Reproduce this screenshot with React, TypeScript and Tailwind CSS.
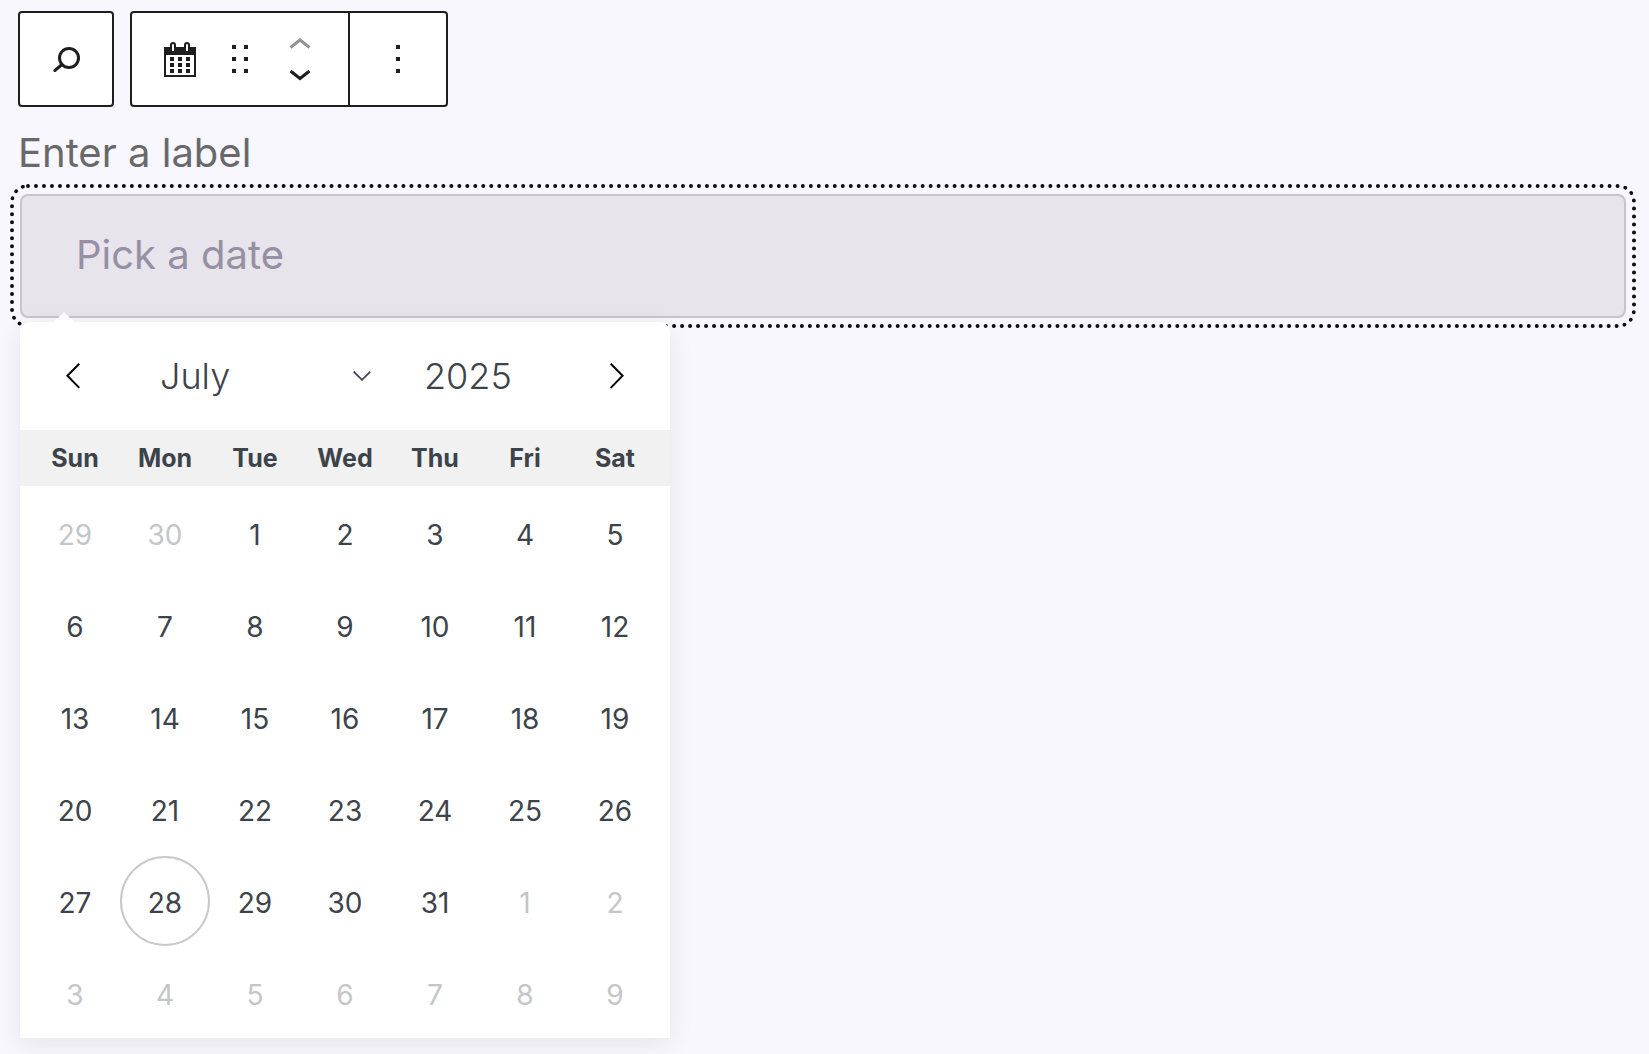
import { useState } from "react";
import { clsx } from "clsx";

const weekdays = ["Sun", "Mon", "Tue", "Wed", "Thu", "Fri", "Sat"];

const months = [
  "January", "February", "March", "April", "May", "June",
  "July", "August", "September", "October", "November", "December",
];

const TODAY = new Date(2025, 6, 28);

function getWeeks(year: number, month: number) {
  const offset = new Date(year, month, 1).getDay();
  return Array.from({ length: 6 }, (_, week) =>
    Array.from({ length: 7 }, (_, day) => new Date(year, month, week * 7 + day + 1 - offset))
  );
}

function BlockToolbar() {
  return (
    <div className="flex gap-4 text-[#1e1e1e]">
      <button aria-label="Search" className="h-24 w-24 rounded-[4px] border-2 border-[#1e1e1e] bg-white">
        <svg viewBox="0 0 92 92" fill="none" stroke="currentColor" strokeWidth="3">
          <circle cx="49" cy="45" r="9.5" />
          <path d="M42 51.5 34.8 57.5" strokeLinecap="round" />
        </svg>
      </button>

      <div className="flex h-24 rounded-[4px] border-2 border-[#1e1e1e] bg-white">
        <div className="flex items-center border-r-2 border-[#1e1e1e] px-3">
          <button aria-label="Date picker" className="flex h-full w-[72px] items-center justify-center pt-0.5">
            <svg width="32" height="36" viewBox="0 0 32 36">
              <path d="M0 5h32v30H0z" fill="currentColor" />
              <path d="M2 13h28v20H2z" fill="#fff" />
              <path d="M7 9V3a2 2 0 0 1 4 0v6M21 9V3a2 2 0 0 1 4 0v6" fill="#fff" stroke="currentColor" strokeWidth="2" />
              <path d="M6 15h4v4H6zM14 15h4v4h-4zM22 15h4v4h-4zM6 21h4v4H6zM14 21h4v4h-4zM22 21h4v4h-4zM6 27h4v4H6zM14 27h4v4h-4zM22 27h4v4h-4z" fill="currentColor" />
            </svg>
          </button>
          <button aria-label="Drag" className="flex h-full w-12 items-center justify-center">
            <svg width="16" height="28" viewBox="0 0 16 28" fill="currentColor">
              <path d="M0 0h4v4H0zM12 0h4v4h-4zM0 12h4v4H0zM12 12h4v4h-4zM0 24h4v4H0zM12 24h4v4h-4z" />
            </svg>
          </button>
          <div className="flex h-full w-[72px] flex-col">
            <button aria-label="Move up" disabled className="flex flex-1 items-end justify-center pb-2.5 text-[#949494]">
              <svg width="22" height="12" viewBox="0 0 22 12" fill="none" stroke="currentColor" strokeWidth="3">
                <path d="M1.5 10.5 11 3 20.5 10.5" />
              </svg>
            </button>
            <button aria-label="Move down" className="flex flex-1 items-start justify-center pt-2.5">
              <svg width="22" height="12" viewBox="0 0 22 12" fill="none" stroke="currentColor" strokeWidth="3">
                <path d="M1.5 2 11 9.5 20.5 2" />
              </svg>
            </button>
          </div>
        </div>
        <button aria-label="Options" className="flex w-24 items-center justify-center">
          <svg width="4" height="28" viewBox="0 0 4 28" fill="currentColor">
            <path d="M0 0h4v4H0zM0 12h4v4H0zM0 24h4v4H0z" />
          </svg>
        </button>
      </div>
    </div>
  );
}

function Calendar() {
  const [year, setYear] = useState(2025);
  const [month, setMonth] = useState(6);

  const move = (step: number) => {
    const next = new Date(year, month + step, 1);
    setYear(next.getFullYear());
    setMonth(next.getMonth());
  };

  return (
    <div className="absolute top-full left-0 mt-1 w-[650px] max-w-full rounded-t-[10px] bg-white font-['Inter',sans-serif] text-[#3c434a] shadow-[0_6px_26px_rgba(0,0,0,0.08)]">
      {/* Pointer */}
      <svg className="absolute bottom-full left-[34px]" width="20" height="10" viewBox="0 0 20 10">
        <path d="M0 10 10 0l10 10z" fill="#fff" />
      </svg>

      {/* Month navigation */}
      <div className="flex h-[108px] items-center text-[36px] font-light">
        <button aria-label="Previous month" onClick={() => move(-1)} className="flex h-full w-[106px] items-center justify-center text-black">
          <svg width="14" height="26" viewBox="0 0 14 26" fill="none" stroke="currentColor" strokeWidth="2">
            <path d="M13.3.7 1.4 12.8 13.3 24.9" />
          </svg>
        </button>
        <div className="relative flex flex-1 items-center">
          <select
            aria-label="Month"
            value={month}
            onChange={e => setMonth(Number(e.target.value))}
            className="w-full appearance-none bg-transparent pl-[34px] outline-none"
          >
            {months.map((name, i) => (
              <option key={name} value={i}>{name}</option>
            ))}
          </select>
          <svg className="pointer-events-none absolute right-[9px]" width="18" height="10" viewBox="0 0 18 10" fill="none" stroke="currentColor" strokeWidth="1.7">
            <path d="M.7.7 9 8.8 17.3.7" />
          </svg>
        </div>
        <input
          aria-label="Year"
          value={year}
          onChange={e => setYear(Number(e.target.value) || 0)}
          className="w-[184px] bg-transparent pl-11 outline-none"
        />
        <button aria-label="Next month" onClick={() => move(1)} className="flex h-full w-[106px] items-center justify-center text-black">
          <svg width="14" height="26" viewBox="0 0 14 26" fill="none" stroke="currentColor" strokeWidth="2">
            <path d="M.7.7l11.9 12.1L.7 24.9" />
          </svg>
        </button>
      </div>

      <table className="block">
        <thead className="block bg-[#f1f1f1]">
          <tr className="grid h-14 grid-cols-7 items-center px-2.5 pt-0.5">
            {weekdays.map(day => (
              <th key={day} scope="col" className="text-[25px] font-bold">{day}</th>
            ))}
          </tr>
        </thead>
        <tbody className="block px-2.5">
          {getWeeks(year, month).map(week => (
            <tr key={week[0].toISOString()} className="grid grid-cols-7 pt-0.5">
              {week.map(date => (
                <td key={date.getTime()} className="flex justify-center p-0">
                  <button
                    className={clsx(
                      "h-[90px] w-[90px] rounded-full border-2 pt-1 text-[28px]",
                      date.getTime() === TODAY.getTime() ? "border-[#c9c9c9]" : "border-transparent",
                      date.getMonth() !== month && "text-[#c4c6c8]"
                    )}
                  >
                    {date.getDate()}
                  </button>
                </td>
              ))}
            </tr>
          ))}
        </tbody>
      </table>
    </div>
  );
}

export default function App() {
  return (
    <main className="min-h-screen bg-[#f8f7fd] pt-[11px] pr-[23px] pl-[18px] font-['Inter',sans-serif]">
      <BlockToolbar />
      <label htmlFor="date" className="mt-[18px] mb-[13px] block text-[40px] leading-[56px] text-[#69696c]">
        Enter a label
      </label>
      <div className="relative ml-0.5">
        <input
          id="date"
          type="text"
          placeholder="Pick a date"
          className="block h-[124px] w-full rounded-[8px] border-2 border-[#c6c4cc] bg-[#e7e4eb] pr-14 pb-1 pl-[54px] text-[40px] outline-4 outline-offset-6 outline-[#0e0e10] outline-dotted placeholder:text-[#978fa3]"
        />
        <Calendar />
      </div>
    </main>
  );
}
